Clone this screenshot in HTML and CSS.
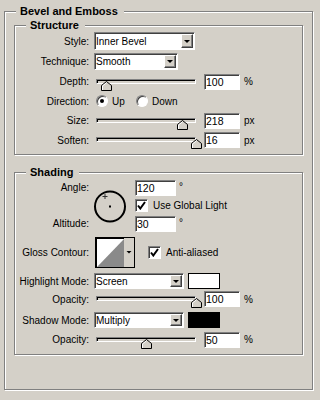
FILE: index.html
```html
<!DOCTYPE html>
<html>
<head>
<meta charset="utf-8">
<link rel="stylesheet" href="styles.css">
</head>
<body>
<div class="group outer">
  <span class="legend">Bevel and Emboss</span>

  <div class="group inner structure">
    <span class="legend">Structure</span>

    <div class="row row-style">
      <span class="label">Style:</span>
      <div class="select w-style sel-18"><span class="select-text">Inner Bevel</span><span class="select-btn"><i class="tri"></i></span></div>
    </div>

    <div class="row row-tech">
      <span class="label">Technique:</span>
      <div class="select w-tech sel-17"><span class="select-text">Smooth</span><span class="select-btn"><i class="tri"></i></span></div>
    </div>

    <div class="row row-depth">
      <span class="label">Depth:</span>
      <div class="slider"><div class="track"></div><svg class="thumb" style="left:10%" width="11" height="10" viewBox="0 0 11 10"><polygon points="5.5,0.5 10.5,4.5 10.5,9.5 0.5,9.5 0.5,4.5" fill="#d4d0c8" stroke="#000"/><polyline points="1.5,9 1.5,5 5.5,1.8" fill="none" stroke="#fff"/></svg></div>
      <span class="field">100</span><span class="unit">%</span>
    </div>

    <div class="row row-dir">
      <span class="label">Direction:</span>
      <span class="opt opt-first"><span class="radio on"></span><span>Up</span></span>
      <span class="opt"><span class="radio"></span><span>Down</span></span>
    </div>

    <div class="row row-size">
      <span class="label">Size:</span>
      <div class="slider"><div class="track"></div><svg class="thumb" style="left:86%" width="11" height="10" viewBox="0 0 11 10"><polygon points="5.5,0.5 10.5,4.5 10.5,9.5 0.5,9.5 0.5,4.5" fill="#d4d0c8" stroke="#000"/><polyline points="1.5,9 1.5,5 5.5,1.8" fill="none" stroke="#fff"/></svg></div>
      <span class="field">218</span><span class="unit">px</span>
    </div>

    <div class="row row-soften">
      <span class="label">Soften:</span>
      <div class="slider"><div class="track"></div><svg class="thumb" style="left:100%" width="11" height="10" viewBox="0 0 11 10"><polygon points="5.5,0.5 10.5,4.5 10.5,9.5 0.5,9.5 0.5,4.5" fill="#d4d0c8" stroke="#000"/><polyline points="1.5,9 1.5,5 5.5,1.8" fill="none" stroke="#fff"/></svg></div>
      <span class="field">16</span><span class="unit">px</span>
    </div>
  </div>

  <div class="group inner shading">
    <span class="legend">Shading</span>

    <div class="angle-grid">
      <span class="label g-angle">Angle:</span>
      <svg class="dial" width="34" height="34" viewBox="0 0 34 34">
        <circle cx="17" cy="17.5" r="15" fill="none" stroke="#000" stroke-width="2"/>
        <rect x="16" y="16.5" width="2" height="2" fill="#000"/>
        <path d="M9.5 7.5h5M12 5v5" stroke="#333" stroke-width="1" fill="none"/>
      </svg>
      <span class="gcell g-angle-val"><span class="field w-angle">120</span><span class="deg">°</span></span>
      <span class="gcell g-global"><span class="check"><svg width="9" height="9" viewBox="0 0 9 9"><path d="M1 4.5 L3.3 7.5 L8 1" fill="none" stroke="#000" stroke-width="2"/></svg></span><span class="check-text">Use Global Light</span></span>
      <span class="label g-alt">Altitude:</span>
      <span class="gcell g-alt-val"><span class="field w-angle">30</span><span class="deg">°</span></span>
    </div>

    <div class="row row-contour">
      <span class="label">Gloss Contour:</span>
      <svg class="contour" width="40" height="31" viewBox="0 0 40 31">
        <rect x="0" y="0" width="40" height="31" fill="#000"/>
        <rect x="2" y="2" width="27" height="28" fill="#fff"/>
        <polygon points="2,30 29,2 29,30" fill="#8a8a8a"/>
        <rect x="29" y="1" width="10" height="29" fill="#d4d0c8"/>
        <polygon points="31.5,14 36.5,14 34,16.5" fill="#000"/>
      </svg>
      <span class="check check-aa"><svg width="9" height="9" viewBox="0 0 9 9"><path d="M1 4.5 L3.3 7.5 L8 1" fill="none" stroke="#000" stroke-width="2"/></svg></span><span class="check-text">Anti-aliased</span>
    </div>

    <div class="row row-hl">
      <span class="label">Highlight Mode:</span>
      <div class="select w-mode sel-16"><span class="select-text">Screen</span><span class="select-btn"><i class="tri"></i></span></div>
      <span class="swatch swatch-white"></span>
    </div>

    <div class="row row-hop">
      <span class="label">Opacity:</span>
      <div class="slider"><div class="track"></div><svg class="thumb" style="left:100%" width="11" height="10" viewBox="0 0 11 10"><polygon points="5.5,0.5 10.5,4.5 10.5,9.5 0.5,9.5 0.5,4.5" fill="#d4d0c8" stroke="#000"/><polyline points="1.5,9 1.5,5 5.5,1.8" fill="none" stroke="#fff"/></svg></div>
      <span class="field">100</span><span class="unit">%</span>
    </div>

    <div class="row row-sm">
      <span class="label">Shadow Mode:</span>
      <div class="select w-mode sel-16"><span class="select-text">Multiply</span><span class="select-btn"><i class="tri"></i></span></div>
      <span class="swatch swatch-black"></span>
    </div>

    <div class="row row-sop">
      <span class="label">Opacity:</span>
      <div class="slider"><div class="track"></div><svg class="thumb" style="left:50%" width="11" height="10" viewBox="0 0 11 10"><polygon points="5.5,0.5 10.5,4.5 10.5,9.5 0.5,9.5 0.5,4.5" fill="#d4d0c8" stroke="#000"/><polyline points="1.5,9 1.5,5 5.5,1.8" fill="none" stroke="#fff"/></svg></div>
      <span class="field">50</span><span class="unit">%</span>
    </div>
  </div>
</div>
</body>
</html>
```

FILE: styles.css
```css
* { box-sizing: border-box; }
html, body { margin: 0; padding: 0; }
body {
  width: 320px;
  height: 400px;
  overflow: hidden;
  background: #d4d0c8;
  font-family: "Liberation Sans", Arial, sans-serif;
  font-size: 10px;
  color: #000;
}

.group {
  position: relative;
  border: 1px solid #808080;
  box-shadow: 1px 1px 0 #fff, inset 1px 1px 0 #fff;
}
.outer {
  margin: 11px 0 0 4px;
  width: 309px;
  height: 379px;
  padding: 13px 0 0 9px;
}
.inner {
  width: 289px;
  display: flex;
  flex-direction: column;
  padding-top: 6px;
}
.structure { height: 130px; margin-bottom: 17px; }
.shading { height: 183px; }

.legend {
  position: absolute;
  top: -7px;
  left: 11px;
  padding: 0 6px 0 4px;
  line-height: 13px;
  background: #d4d0c8;
  font-weight: bold;
  font-size: 11px;
  white-space: nowrap;
}

.row { display: flex; align-items: center; flex: none; }
.label {
  width: 74px;
  margin-right: 5px;
  text-align: right;
  flex: none;
  white-space: nowrap;
}

.row-style { height: 18px; }
.row-tech { height: 22px; }
.row-depth { height: 19px; }
.row-dir { height: 20px; }
.row-size { height: 19px; }
.row-soften { height: 20px; }

.row-contour { height: 31px; margin-top: 5px; }
.row-hl { height: 16px; margin-top: 5px; }
.row-hop { height: 20px; }
.row-sm { height: 22px; }
.row-sop { height: 17px; }

/* dropdowns */
.select {
  display: flex;
  flex: none;
  border: 1px solid;
  border-color: #808080 #fff #fff #808080;
  box-shadow: inset 1px 1px 0 #404040;
  background: #fff;
  padding: 1px;
}
.sel-18 { height: 18px; }
.sel-17 { height: 17px; }
.sel-16 { height: 16px; }
.w-style { width: 101px; }
.w-tech { width: 84px; }
.w-mode { width: 90px; }
.select-text {
  flex: 1;
  display: flex;
  align-items: center;
  white-space: nowrap;
}
.select-btn {
  width: 12px;
  flex: none;
  background: #d4d0c8;
  border: 1px solid;
  border-color: #fff #404040 #404040 #fff;
  box-shadow: inset -1px -1px 0 #808080;
  display: flex;
  align-items: center;
  justify-content: center;
}
.tri {
  width: 0;
  height: 0;
  border-left: 3px solid transparent;
  border-right: 3px solid transparent;
  border-top: 3px solid #000;
}

/* text fields */
.field {
  width: 36px;
  height: 16px;
  flex: none;
  background: #fff;
  border: 1px solid;
  border-color: #808080 #fff #fff #808080;
  box-shadow: inset 1px 1px 0 #404040;
  padding-left: 1px;
  line-height: 14px;
  font-size: 10.5px;
}
.w-angle { width: 41px; }
.unit { margin-left: 4px; }
.deg { margin-left: 3px; align-self: flex-start; margin-top: 3px; line-height: 10px; }

/* sliders */
.slider {
  position: relative;
  width: 100px;
  height: 16px;
  margin: 0 8px 0 2px;
  flex: none;
  padding-top: 5px;
}
.track {
  height: 5px;
  border: 1px solid;
  border-color: #808080 #fff #fff #808080;
  box-shadow: inset 1px 1px 0 #000;
  background: #d4d0c8;
}
.thumb {
  position: absolute;
  top: 7px;
  margin-left: -5px;
  display: block;
}

/* radios */
.opt { display: flex; align-items: center; gap: 4px; }
.opt-first { width: 40px; margin-left: 2px; }
.radio {
  width: 12px;
  height: 12px;
  flex: none;
  border-radius: 50%;
  background: #fff;
  border: 1px solid;
  border-color: #808080 #fff #fff #808080;
  box-shadow: inset 1px 1px 0 #404040;
  display: flex;
  align-items: center;
  justify-content: center;
}
.radio.on::after {
  content: "";
  width: 4px;
  height: 4px;
  border-radius: 50%;
  background: #000;
}

/* checkboxes */
.check {
  width: 13px;
  height: 13px;
  flex: none;
  background: #fff;
  border: 1px solid;
  border-color: #808080 #fff #fff #808080;
  box-shadow: inset 1px 1px 0 #404040;
  display: flex;
  align-items: center;
  justify-content: center;
}
.check svg { display: block; }
.check-text { margin-left: 5px; white-space: nowrap; }
.check-aa { margin-left: 13px; }

/* angle block */
.angle-grid {
  display: grid;
  grid-template-columns: 78px 42px auto;
  grid-template-rows: 17px 19px 17px;
  align-items: center;
}
.angle-grid .label { width: auto; margin: 0; padding-right: 4px; }
.g-angle { grid-column: 1; grid-row: 1; }
.g-alt { grid-column: 1; grid-row: 3; }
.dial { grid-column: 2; grid-row: 1 / 4; display: block; }
.gcell { display: flex; align-items: center; height: 100%; }
.g-angle-val { grid-column: 3; grid-row: 1; }
.g-global { grid-column: 3; grid-row: 2; }
.g-alt-val { grid-column: 3; grid-row: 3; }

.contour { display: block; margin-left: 1px; flex: none; }

.swatch {
  width: 32px;
  height: 16px;
  margin-left: 4px;
  flex: none;
  border: 1px solid #000;
}
.swatch-white { background: #fff; }
.swatch-black { background: #000; }
```
